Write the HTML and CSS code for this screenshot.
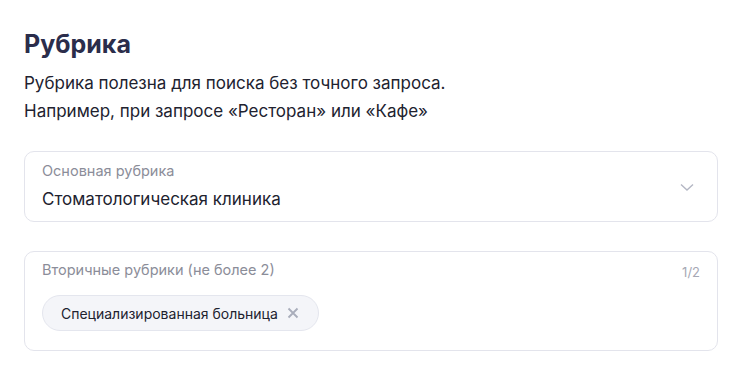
FILE: index.html
```html
<!DOCTYPE html>
<html lang="ru">
<head>
    <meta charset="UTF-8">
    <meta name="viewport" content="width=device-width, initial-scale=1.0">
    <title>Рубрика</title>
    <link rel="stylesheet" href="styles.css">
</head>
<body>
    <div class="container">
        <h1>Рубрика</h1>
        <p class="hint">Рубрика полезна для поиска без точного запроса.<br>Например, при запросе «Ресторан» или «Кафе»</p>

        <div class="field select-field">
            <div class="field-body">
                <div class="field-label">Основная рубрика</div>
                <div class="field-value">Стоматологическая клиника</div>
            </div>
            <svg class="chevron" width="14" height="14" viewBox="0 0 14 14">
                <path d="M1 4.5l6 5.5 6-5.5" fill="none" stroke="#b4b7c4" stroke-width="1.4"/>
            </svg>
        </div>

        <div class="field tags-field">
            <div class="field-head">
                <div class="field-label">Вторичные рубрики (не более 2)</div>
                <div class="counter">1/2</div>
            </div>
            <div class="tags">
                <span class="tag">
                    Специализированная больница
                    <svg class="tag-remove" width="12" height="12" viewBox="0 0 12 12">
                        <path d="M1.5 1.5l9 9M10.5 1.5l-9 9" stroke="#a9adbb" stroke-width="1.8"/>
                    </svg>
                </span>
            </div>
        </div>
    </div>
</body>
</html>
```

FILE: styles.css
```css
* {
    box-sizing: border-box;
    margin: 0;
    padding: 0;
}

body {
    font-family: "Inter", "Noto Sans", Arial, sans-serif;
    color: #21222f;
    background-color: #fff;
}

.container {
    padding: 28px 27px 0 24px;
}

h1 {
    font-size: 25px;
    font-weight: 700;
    line-height: 32px;
    color: #2b2d4b;
    margin-bottom: 9px;
}

.hint {
    font-size: 17px;
    line-height: 28px;
    color: #21222f;
    margin-bottom: 26px;
}

.field {
    border: 1px solid #e3e4ec;
    border-radius: 10px;
    background: #fff;
}

.select-field {
    display: flex;
    align-items: center;
    padding: 9px 23px 9px 17px;
    margin-bottom: 29px;
}

.field-body {
    flex: 1;
}

.field-label {
    font-size: 14.5px;
    line-height: 20px;
    color: #8b8d99;
}

.field-value {
    font-size: 17px;
    line-height: 26px;
    margin-top: 5px;
    color: #21222f;
}

.tags-field {
    padding: 8px 17px 19px 17px;
}

.field-head {
    display: flex;
    justify-content: space-between;
    align-items: flex-start;
    height: 20px;
    margin-bottom: 15px;
}

.counter {
    font-size: 13px;
    line-height: 16px;
    padding-top: 4px;
    color: #a6a8b4;
}

.tags {
    display: flex;
}

.tag {
    display: inline-flex;
    align-items: center;
    gap: 9px;
    height: 36px;
    padding: 0 19px 0 18px;
    font-size: 14px;
    color: #21222f;
    background: #f4f5f9;
    border: 1px solid #e4e6ee;
    border-radius: 18px;
}
```
